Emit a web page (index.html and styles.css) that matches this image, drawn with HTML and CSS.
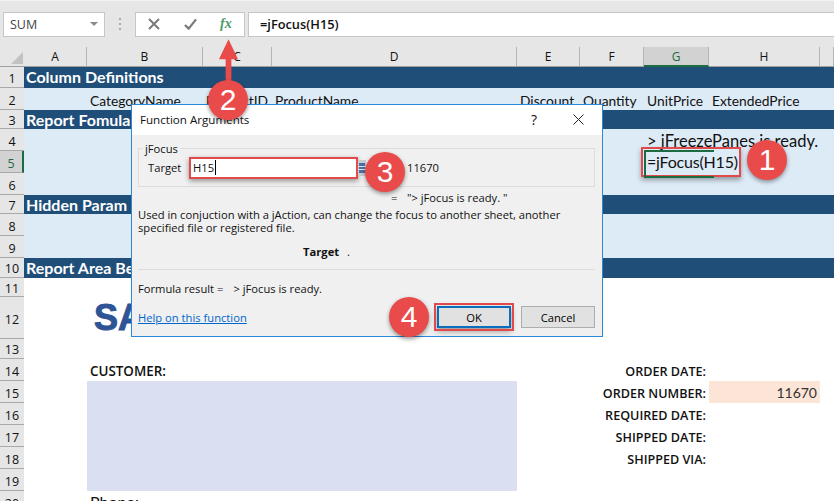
FILE: index.html
```html
<!DOCTYPE html>
<html lang="en">
<head>
    <meta charset="UTF-8">
    <title>Function Arguments</title>
    <link rel="stylesheet" href="styles.css">
</head>
<body>
    <div id="app">
        <!-- Formula bar -->
        <div class="formula-bar">
            <div class="name-box">
                <span>SUM</span>
                <i class="caret-down"></i>
            </div>
            <div class="grip"><i></i><i></i><i></i></div>
            <div class="fx-buttons">
                <svg class="fx-icon" viewBox="0 0 12 12"><path d="M1 1l10 10M11 1L1 11" fill="none" stroke="#7a7a7a" stroke-width="2"></path></svg>
                <svg class="fx-icon fx-check" viewBox="0 0 14 12"><path d="M1 7l4 4 8-10" fill="none" stroke="#7a7a7a" stroke-width="2.4"></path></svg>
                <span class="fx-label">fx</span>
            </div>
            <div class="formula-input">=jFocus(H15)</div>
        </div>

        <!-- Sheet -->
        <div class="sheet">
            <div class="row r20 col-head">
                <div class="corner"><svg viewBox="0 0 12 12"><path d="M12 0v12H0z" fill="#c2c2c2"></path></svg></div>
                <div>A</div><div>B</div><div>C</div><div>D</div><div>E</div><div>F</div><div class="active">G</div><div>H</div><div></div>
            </div>
            <div class="row r21"><div class="rn">1</div><div class="band">Column Definitions</div></div>
            <div class="row r22 light">
                <div class="rn">2</div><div></div>
                <div class="cell">CategoryName</div><div class="cell">ProductID</div><div class="cell">ProductName</div>
                <div class="cell">Discount</div><div class="cell">Quantity</div><div class="cell">UnitPrice</div><div class="cell">ExtendedPrice</div>
            </div>
            <div class="row r19"><div class="rn">3</div><div class="band">Report Fomula</div></div>
            <div class="row r22 light">
                <div class="rn">4</div><div></div><div></div><div></div><div></div><div></div><div></div>
                <div class="cell cell-big">&gt; jFreezePanes is ready.</div>
            </div>
            <div class="row r22 light">
                <div class="rn rn-active">5</div><div></div><div></div><div></div><div></div><div></div><div></div>
                <div class="cell cell-big cell-formula">=jFocus(H15)</div>
            </div>
            <div class="row r22 light"><div class="rn">6</div></div>
            <div class="row r19"><div class="rn">7</div><div class="band">Hidden Param</div></div>
            <div class="row r22 light"><div class="rn">8</div></div>
            <div class="row r22 light"><div class="rn">9</div></div>
            <div class="row r20"><div class="rn">10</div><div class="band">Report Area Be</div></div>
            <div class="row r19"><div class="rn">11</div></div>
            <div class="row r42"><div class="rn">12</div><div></div><div class="logo">SA</div></div>
            <div class="row r20"><div class="rn">13</div></div>
            <div class="row r22"><div class="rn">14</div><div></div><div class="cell label-left">CUSTOMER:</div><div></div><div></div><div class="label-right">ORDER DATE:</div></div>
            <div class="row r22"><div class="rn">15</div><div></div><div class="customer"></div><div class="label-right">ORDER NUMBER:</div><div class="order-no">11670</div></div>
            <div class="row r22"><div class="rn">16</div><div></div><div class="customer"></div><div class="label-right">REQUIRED DATE:</div></div>
            <div class="row r22"><div class="rn">17</div><div></div><div class="customer"></div><div class="label-right">SHIPPED DATE:</div></div>
            <div class="row r22"><div class="rn">18</div><div></div><div class="customer"></div><div class="label-right">SHIPPED VIA:</div></div>
            <div class="row r22"><div class="rn">19</div><div></div><div class="customer"></div></div>
            <div class="row r22"><div class="rn">20</div><div></div><div class="cell label-plain">Phone:</div></div>
        </div>

        <!-- Dialog -->
        <div class="dialog">
            <div class="dialog-title">
                <span>Function Arguments</span>
                <span class="help-btn">?</span>
                <svg class="close-btn" viewBox="0 0 11 11"><path d="M.5.5l10 10M10.5.5l-10 10" fill="none" stroke="#222" stroke-width="1"></path></svg>
            </div>
            <div class="dialog-body">
                <div class="group">
                    <span class="legend">jFocus</span>
                    <span class="arg-name">Target</span>
                    <div class="arg-input"><span class="text-caret">H15</span></div>
                    <svg class="ref-btn" viewBox="0 0 8 16"><path d="M0 0h8v16H0z" fill="#c9cdd2"></path><path d="M1 3h6v10H1z" fill="#4a6fa5"></path><path d="M1 6.5h6M1 9.5h6" stroke="#dfe6f0"></path></svg>
                    <span class="arg-value">11670</span>
                </div>
                <div class="eq-row"><span class="eq">=</span><span>"&gt; jFocus is ready. "</span></div>
                <p class="desc">Used in conjuction with a jAction, can change the focus to another sheet, another<br>specified file or registered file.</p>
                <div class="arg-desc"><b>Target</b><span class="dot">.</span></div>
                <div class="sep"></div>
                <div class="result">Formula result =<span class="result-val">&gt; jFocus is ready.</span></div>
                <div class="dialog-foot">
                    <a class="help-link">Help on this function</a>
                    <button class="btn btn-ok">OK</button>
                    <button class="btn">Cancel</button>
                </div>
            </div>
        </div>

        <!-- Annotations -->
        <div class="cell-mark"></div>
        <svg class="arrow" viewBox="0 0 22 50"><path d="M11 0L21 21H14V50H8V21H1z" fill="#e94b4b"></path></svg>
        <div class="callout c1">1</div>
        <div class="callout c2">2</div>
        <div class="callout c3">3</div>
        <div class="callout c4">4</div>
    </div>
</body>
</html>
```

FILE: styles.css
```css
* {
    margin: 0;
    padding: 0;
    box-sizing: border-box;
}

body, html {
    width: 100%;
    height: 100%;
    overflow: hidden;
    background-color: #e6e6e6;
    color: #111;
    font-family: "Open Sans", sans-serif;
}

#app {
    position: relative;
    width: 834px;
    height: 501px;
    overflow: hidden;
}

/* Formula bar */
.formula-bar {
    display: flex;
    align-items: center;
    height: 47px;
    padding: 11px 0 11px 3px;
    border-top: 1px solid #f2f2f2;
}

.name-box {
    display: flex;
    align-items: center;
    justify-content: space-between;
    width: 102px;
    height: 25px;
    padding: 0 6px;
    background-color: #fff;
    border: 1px solid #c6c6c6;
    font-size: 12.5px;
    color: #444;
}

.caret-down {
    width: 0;
    height: 0;
    border-left: 4px solid transparent;
    border-right: 4px solid transparent;
    border-top: 4px solid #8a8a8a;
}

.grip {
    display: flex;
    flex-direction: column;
    gap: 3px;
    width: 30px;
    align-items: center;
}

.grip i {
    width: 2px;
    height: 2px;
    background-color: #a8a8a8;
}

.fx-buttons {
    display: flex;
    align-items: center;
    width: 110px;
    height: 25px;
    padding-left: 12px;
    gap: 24px;
    background-color: #fff;
    border: 1px solid #c6c6c6;
}

.fx-icon {
    width: 12px;
    height: 12px;
}

.fx-check {
    width: 13px;
}

.fx-label {
    margin-left: -1px;
    font-family: "Liberation Serif", serif;
    font-style: italic;
    font-weight: bold;
    font-size: 14px;
    color: #4a9a6a;
}

.formula-input {
    flex: 1;
    height: 25px;
    margin-left: 3px;
    padding-left: 11px;
    background-color: #fff;
    border: 1px solid #c6c6c6;
    border-right: none;
    font-size: 12.8px;
    font-weight: 600;
    line-height: 23px;
}

/* Sheet */
.row {
    display: grid;
    grid-template-columns: 24px 63px 116px 69px 245px 63px 64px 65px 111px 1fr;
    grid-template-rows: minmax(0, 1fr);
    background-color: #fff;
    font-family: "Lato", sans-serif;
}

.r19 { height: 19px; }
.r20 { height: 20px; }
.r21 { height: 21px; }
.r22 { height: 22px; }
.r42 { height: 42px; }

.col-head {
    background-color: #e6e6e6;
    border-bottom: 1px solid #9f9f9f;
    font-family: "Open Sans", sans-serif;
    font-size: 12px;
    line-height: 19px;
    text-align: center;
}

.col-head div {
    border-right: 1px solid #b4b4b4;
}

.col-head .corner {
    padding: 5px 1px 1px 11px;
    border-right: none;
}

.col-head .corner svg {
    display: block;
    width: 12px;
    height: 12px;
}

.col-head .active {
    background-color: #d2d2d2;
    color: #1d6b41;
    border-bottom: 2px solid #1d6b41;
    height: 20px;
}

.rn {
    background-color: #e6e6e6;
    border-bottom: 1px solid #a9a9a9;
    font-family: "Open Sans", sans-serif;
    font-size: 12.5px;
    text-align: center;
    line-height: 21px;
}

.r21 .rn {
    line-height: 23px;
}

.r22 .rn {
    line-height: 25px;
}

.rn-active {
    background-color: #d2d2d2;
    color: #1d6b41;
    border-right: 2px solid #1d6b41;
}

.r42 .rn {
    line-height: 45px;
}

.band {
    grid-column: 2 / -1;
    padding-left: 2px;
    background-color: #1f4e78;
    color: #fff;
    font-weight: bold;
    font-size: 16px;
    line-height: 20px;
    white-space: nowrap;
}

.light {
    background-color: #ddebf7;
}

.cell {
    padding-left: 3px;
    font-size: 13.8px;
    line-height: 26px;
    white-space: nowrap;
}

.cell-big {
    font-size: 16.5px;
    line-height: 24px;
}

.cell-formula {
    font-size: 16px;
    letter-spacing: -0.2px;
    line-height: 22px;
}

.logo {
    padding: 0 0 0 7px;
    font-family: "Liberation Sans", sans-serif;
    font-weight: bold;
    font-size: 36px;
    line-height: 42px;
    color: #2f5496;
    -webkit-text-stroke: 1px #2f5496;
}

.label-left {
    font-family: "Open Sans", sans-serif;
    font-weight: 600;
    font-size: 13.4px;
    line-height: 24px;
}

.label-plain {
    font-size: 16px;
    line-height: 21px;
}

.label-right {
    grid-column: 6 / 9;
    padding-right: 3px;
    font-family: "Open Sans", sans-serif;
    font-weight: 600;
    font-size: 12.6px;
    line-height: 25px;
    text-align: right;
    white-space: nowrap;
}

.customer {
    grid-column: 3 / 6;
    background-color: #dae0f1;
}

.order-no {
    padding-right: 3px;
    background-color: #fce4d6;
    color: #333;
    font-size: 14px;
    line-height: 24px;
    text-align: right;
}

/* Dialog */
.dialog {
    position: absolute;
    top: 104px;
    left: 131px;
    width: 472px;
    height: 233px;
    background-color: #f0f0f0;
    border: 1px solid #2b88d8;
    font-size: 11.2px;
    color: #111;
}

.dialog-title {
    display: flex;
    align-items: center;
    height: 30px;
    padding: 0 0 2px 8px;
    background-color: #fff;
    font-size: 11.6px;
}

.help-btn {
    margin-left: auto;
    font-size: 14px;
}

.close-btn {
    width: 11px;
    height: 11px;
    margin: 0 18px 0 36px;
}

.dialog-body {
    padding: 13px 7px 0 6px;
}

.group {
    position: relative;
    display: flex;
    align-items: center;
    height: 39px;
    padding-left: 9px;
    border: 1px solid #dcdcdc;
}

.legend {
    position: absolute;
    top: -7px;
    left: 4px;
    padding: 0 2px;
    background-color: #f0f0f0;
    line-height: 13px;
}

.arg-name {
    width: 41px;
}

.arg-input {
    width: 169px;
    height: 22px;
    padding-left: 2px;
    background-color: #fff;
    border: 2px solid #e04a4a;
    box-shadow: 0 2px 5px rgba(0, 0, 0, 0.4);
    line-height: 18px;
}

.text-caret {
    padding-right: 1px;
    border-right: 1px solid #000;
}

.ref-btn {
    width: 8px;
    height: 16px;
}

.arg-value {
    margin-left: 41px;
}

.eq-row {
    display: flex;
    height: 14px;
    margin-top: 4px;
    padding-left: 253px;
    line-height: 14px;
}

.eq {
    width: 16px;
}

.desc {
    margin-top: 3px;
    line-height: 13px;
}

.arg-desc {
    height: 14px;
    margin-top: 11px;
    padding-left: 165px;
    line-height: 14px;
}

.dot {
    margin-left: 8px;
}

.sep {
    height: 1px;
    margin-top: 10px;
    background-color: #dcdcdc;
}

.result {
    height: 14px;
    margin-top: 12px;
    line-height: 14px;
}

.result-val {
    margin-left: 10px;
}

.dialog-foot {
    display: flex;
    align-items: center;
    height: 22px;
    margin-top: 10px;
}

.help-link {
    margin-right: auto;
    color: #0066cc;
    text-decoration: underline;
}

.btn {
    width: 74px;
    height: 22px;
    margin-left: 10px;
    background-color: #e1e1e1;
    border: 1px solid #adadad;
    font: inherit;
}

.btn-ok {
    border: 2px solid #0a6ebd;
    outline: 2px solid #e04a4a;
    outline-offset: 1px;
    box-shadow: 0 3px 6px rgba(0, 0, 0, 0.4);
}

/* Annotations */
.cell-mark {
    position: absolute;
    top: 147px;
    left: 641px;
    width: 100px;
    height: 30px;
    border: 2px solid #e04a4a;
    box-shadow: 0 3px 5px rgba(0, 0, 0, 0.35);
}

.cell-mark::before {
    content: "";
    position: absolute;
    top: 1px;
    left: 1px;
    width: 68px;
    height: 24px;
    border: 2px solid #1d6b41;
    border-right: none;
}

.arrow {
    position: absolute;
    top: 38px;
    left: 218px;
    width: 21px;
    height: 50px;
}

.callout {
    position: absolute;
    width: 40px;
    height: 40px;
    border-radius: 50%;
    background-color: #e94b4b;
    box-shadow: 0 2px 4px rgba(0, 0, 0, 0.4);
    color: #fff;
    font-family: "Liberation Sans", sans-serif;
    font-size: 30px;
    line-height: 40px;
    text-align: center;
}

.c1 { top: 140px; left: 747px; }
.c2 { top: 80px; left: 208px; }
.c3 { top: 152px; left: 365px; }
.c4 { top: 297px; left: 389px; }
```
